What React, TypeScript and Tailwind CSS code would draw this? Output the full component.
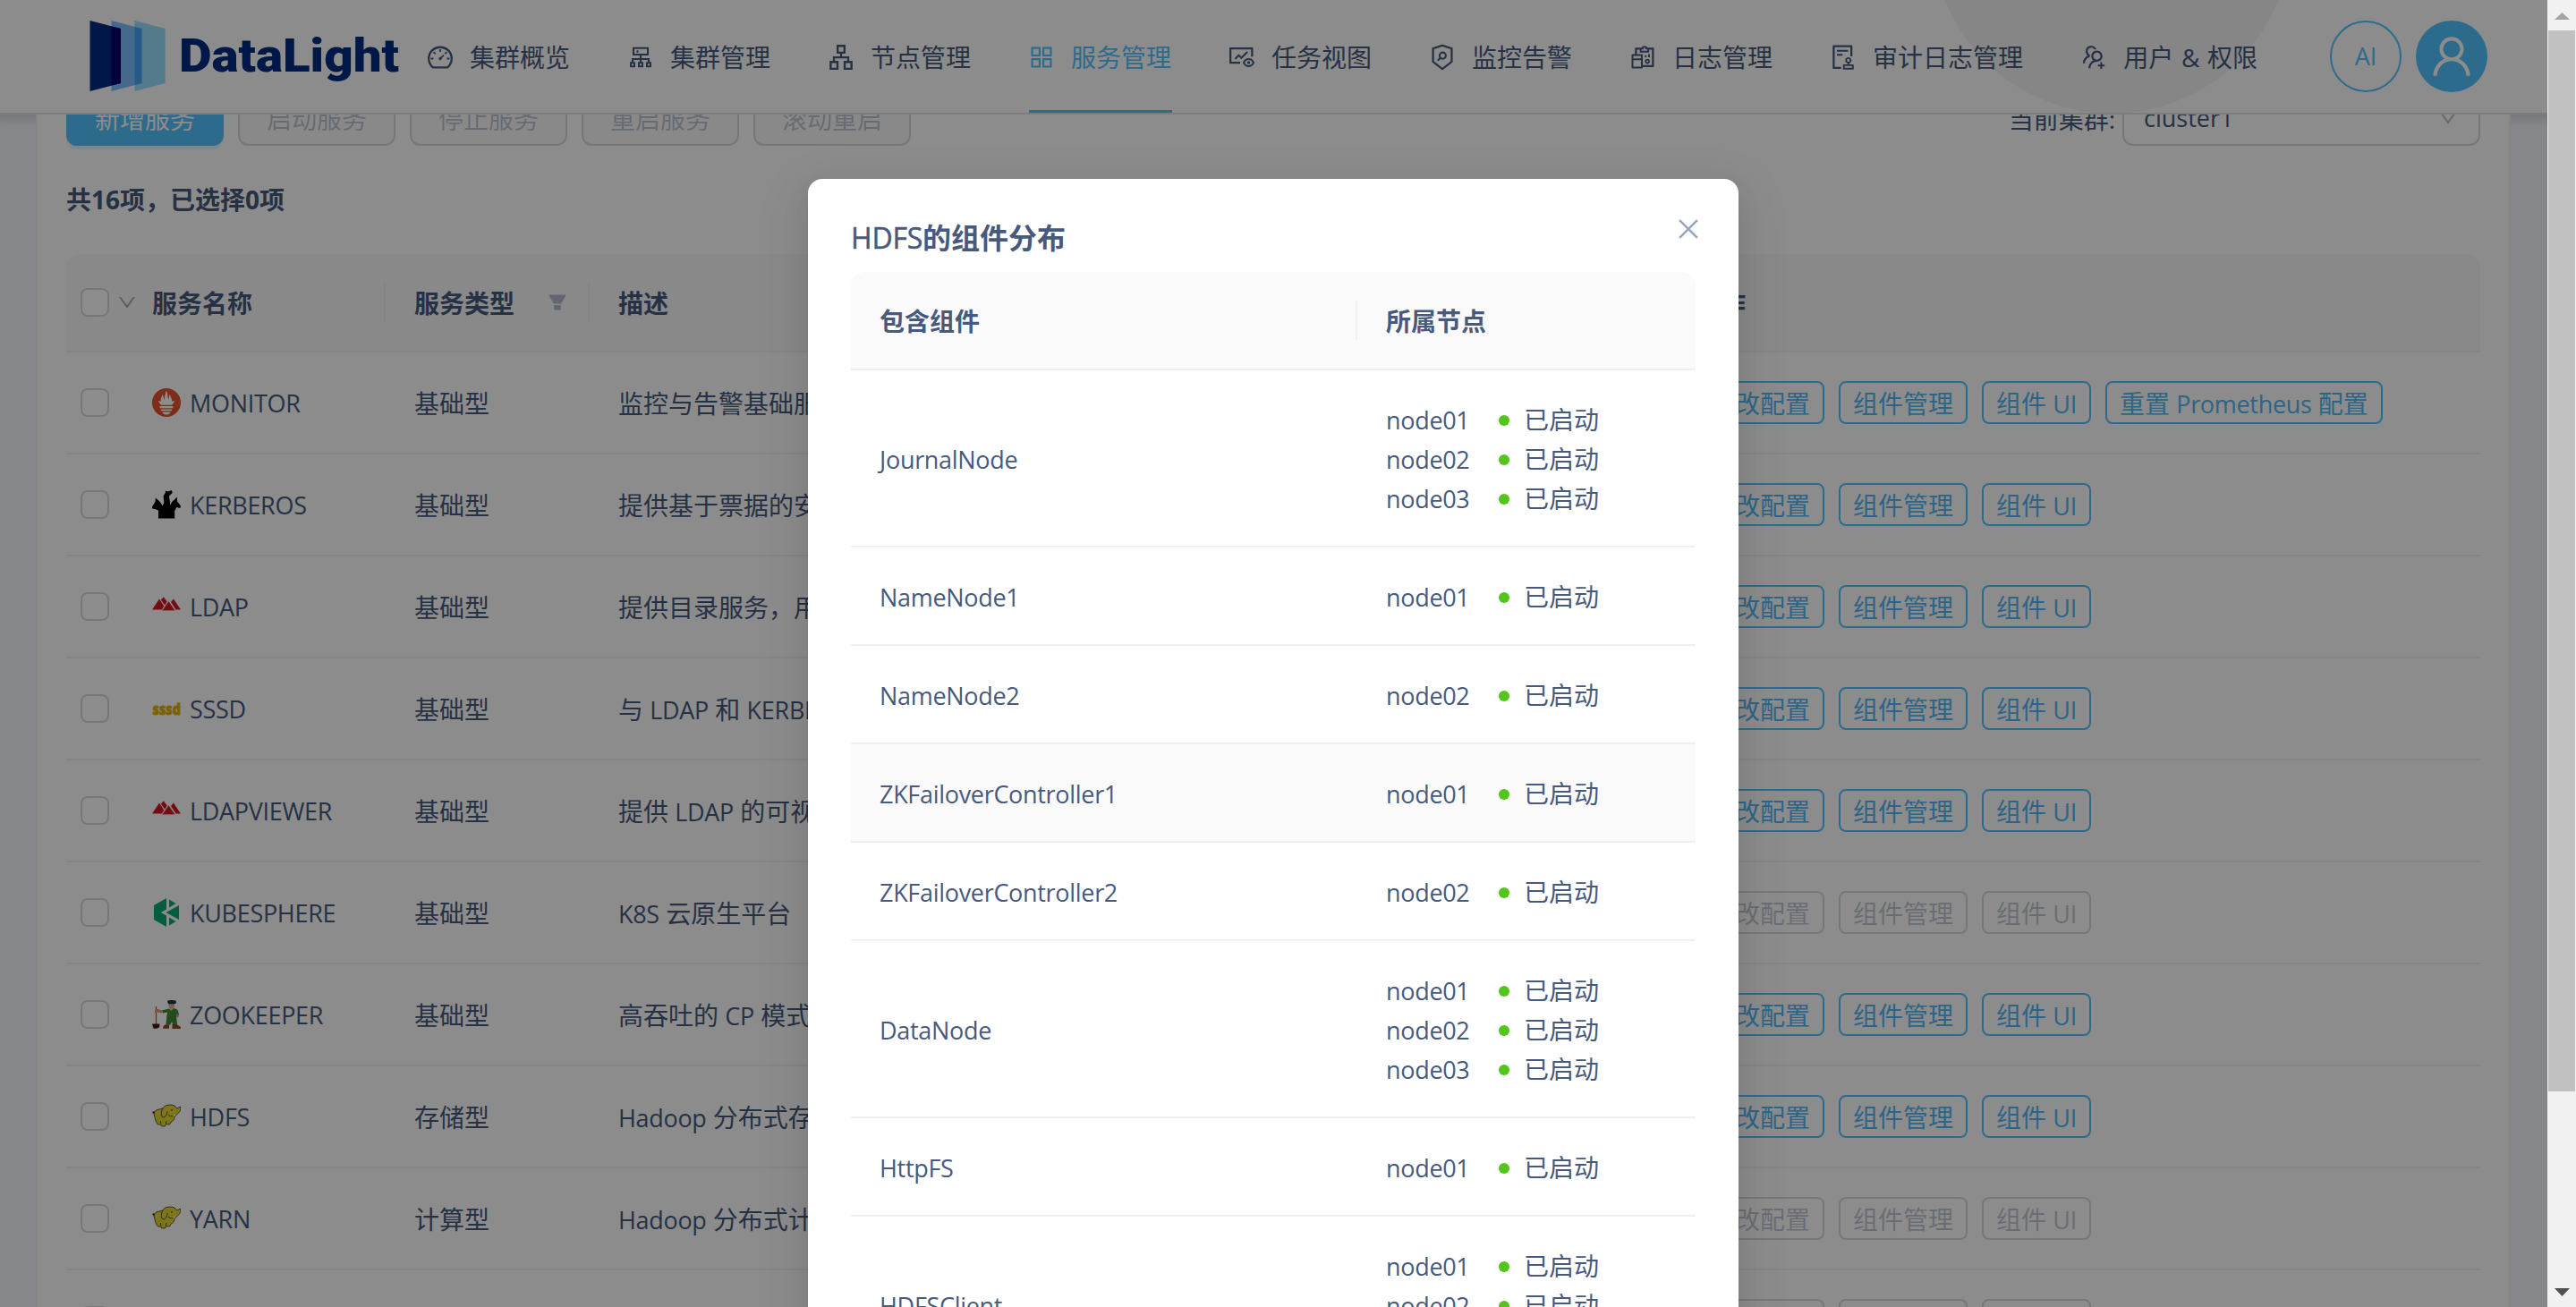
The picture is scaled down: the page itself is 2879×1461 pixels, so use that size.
import type { ReactNode } from "react";
import type { IconType } from "react-icons";
import {
  AiOutlineDashboard,
  AiOutlineCluster,
  AiOutlineApartment,
  AiOutlineAppstore,
  AiOutlineFundView,
  AiOutlineSecurityScan,
  AiOutlineReconciliation,
  AiOutlineAudit,
  AiOutlineUsergroupAdd,
  AiOutlineUser,
  AiOutlineClose,
  AiOutlineDown,
  AiFillFilter,
} from "react-icons/ai";

/* Latin runs are set slightly smaller and tighter than the Chinese text around them. */
function Mix({ children }: { children: string }) {
  const parts = children.split(/([\x21-\x7e]+(?: [\x21-\x7e]+)*)/);
  return (
    <>
      {parts.map((p, i) =>
        i % 2 ? (
          <span key={i} className="text-[0.964em] leading-none tracking-[-0.3px]">
            {p}
          </span>
        ) : (
          p
        ),
      )}
    </>
  );
}

const menu: { label: string; Icon: IconType; active?: boolean }[] = [
  { label: "集群概览", Icon: AiOutlineDashboard },
  { label: "集群管理", Icon: AiOutlineCluster },
  { label: "节点管理", Icon: AiOutlineApartment },
  { label: "服务管理", Icon: AiOutlineAppstore, active: true },
  { label: "任务视图", Icon: AiOutlineFundView },
  { label: "监控告警", Icon: AiOutlineSecurityScan },
  { label: "日志管理", Icon: AiOutlineReconciliation },
  { label: "审计日志管理", Icon: AiOutlineAudit },
  { label: "用户 & 权限", Icon: AiOutlineUsergroupAdd },
];

function Logo() {
  return (
    <svg className="ml-[100px] h-[126px] w-[346px] shrink-0" viewBox="100 0 346 126">
      <polygon points="150.5,23 184.6,32 184.6,93 150.5,102" fill="#99e0ff" />
      <polygon points="124.5,23 158.5,32 158.5,93 124.5,102" fill="#7cbfff" />
      <polygon points="150.5,30 158.5,32 158.5,93 150.5,95" fill="#49a4f5" />
      <polygon points="100.5,23 135,32 135,93 100.5,102" fill="#002c82" />
      <polygon points="124.5,29.5 135,32 135,93 124.5,95.5" fill="#000074" />
      <text
        x="200"
        y="80.3"
        fontFamily="Roboto, sans-serif"
        fontWeight="900"
        fontSize="52"
        textLength="246"
        lengthAdjust="spacingAndGlyphs"
        fill="#002c82"
      >
        DataLight
      </text>
    </svg>
  );
}

function Header() {
  return (
    <header className="relative flex h-32 shrink-0 overflow-hidden border-b-2 border-[#e4e4e4] bg-white">
      <div className="absolute top-[-273px] left-[2160px] size-[400px] rounded-full bg-black/[0.045]" />
      <Logo />
      <nav className="relative flex">
        {menu.map(({ label, Icon, active }) => (
          <div key={label} className="px-8">
            <div
              className={
                active
                  ? "flex h-[127px] items-center gap-[17px] border-b-4 border-[#52c4ff] pt-[5px] text-[#52c4ff]"
                  : "flex h-[127px] items-center gap-[17px] border-b-4 border-transparent pt-[5px]"
              }
            >
              <Icon className="-ml-0.5 size-8" />
              <span className="mr-px whitespace-nowrap [word-spacing:1.5px]">{label}</span>
            </div>
          </div>
        ))}
      </nav>
      <div className="relative mt-[23px] mr-[67px] ml-auto flex gap-4">
        <div className="flex size-20 items-center justify-center rounded-full border-2 border-[#52c4ff] text-[27px] text-[#52c4ff]">
          AI
        </div>
        <div className="flex size-20 items-center justify-center rounded-full bg-[#52c4ff] text-white">
          <AiOutlineUser className="size-14" />
        </div>
      </div>
    </header>
  );
}

function Prometheus() {
  return (
    <svg viewBox="0 0 32 32" className="size-8">
      <circle cx="16" cy="16" r="16" fill="#e6522c" />
      <path
        fill="#fff"
        d="M10.200 18.800C8.600 16.800 7.400 16.600 7 14c1.500.4 2 .6 3 .6C9 11 11 10.500 11.400 7c1.800 2 1.200 4.500 2.400 6C13.500 9 15.500 6 15.600 2.500c2.400 2.700 1.200 7.500 2.900 10C18.500 10 19 8 20.200 6.500c-.2 3.500 2.600 5 1.800 8.100 1 0 1.800-.2 3-.6-.2 2.500-1.700 3-3.200 4.800zM8.600 20h14.800v2.300H8.600zM10 23.600h12v1.600H10zM11.500 26.400h9c-.4 2.100-2.300 3-4.500 3s-4.100-.9-4.500-3z"
      />
    </svg>
  );
}

function Kerberos() {
  return (
    <svg viewBox="0 0 32 32" className="size-8">
      <path
        fill="#000"
        d="M7 31.500V22.500L3.200 21 .2 20.600 0 18.400 3.500 13 3.800 8.500l2.600 2.200C9 12.500 10.500 15 11.500 17.500L13.400 14 12.600 6.500 15 2.500 14.800.6l2.800 1L22 0l.6 3-3.600 3.400.6 4.600.9 6c.8-2.800 2-5 4.600-6.500L27.600 7.500l.5 5 3.900 5-.7 2.400L27.400 19l-2.200 4v8.500z"
      />
    </svg>
  );
}

function Ldap() {
  return (
    <svg viewBox="0 0 32 32" className="size-8">
      <path
        fill="#d41724"
        d="M0 19.500 8 7.500l5.300 8-2.500 4zM9.800 8.800l3-3.500 4 5.100-2.500 4.100zM21 11l3-3.500 8 12h-5.500z"
      />
      <path fill="#d41724" stroke="#fff" strokeWidth=".7" d="M10.800 20.800 18.500 9.800l7.500 11z" />
    </svg>
  );
}

function Sssd() {
  return (
    <svg viewBox="0 0 32 32" className="size-8">
      <text
        x="0.5"
        y="22.8"
        fontFamily="Open Sans, sans-serif"
        fontWeight="800"
        fontSize="17"
        textLength="31.5"
        lengthAdjust="spacingAndGlyphs"
        fill="#e0b000"
        stroke="#e0b000"
        strokeWidth=".8"
      >
        sssd
      </text>
    </svg>
  );
}

function Kubesphere() {
  return (
    <svg viewBox="0 0 32 32" className="size-8" fill="#00aa72">
      <path d="M16 0v12.600L9.800 16l6.200 3.400V32L2 24V8z" />
      <path d="M19 1.600 26.500 6 19 10.600zM30 8v16L15.500 16zM19 21.400l7.500 4.600-7.500 4.400z" />
    </svg>
  );
}

function Zookeeper() {
  return (
    <svg viewBox="0 0 32 32" className="size-8">
      <path d="M4.500 7v20" stroke="#a8623c" strokeWidth="1.200" />
      <path d="M0 26.500h8.500l-.5 4c-2.500 1.500-5 1.500-6.500 1z" fill="#3a2218" />
      <path d="M18.500 3h6.500v5.500l-2 1.500h-3l-1.500-2.500z" fill="#e0b08c" />
      <path d="M17 .8C19-.2 24-.2 26.800.8v2.800L25 4.200h-6.500l-1-1z" fill="#1e3048" />
      <path
        d="M11 11.500 18.500 9.500l3 2L24.500 9l4 1.800 1.800 5.700-3.300 1 1 9.500h-5l-1-3-1.500 3.500h-5l1-10.500.5-3.500-5 1z"
        fill="#3f8a35"
      />
      <path d="m3 10.500 3.500-.5 4.500 1.600v2.600L6 13.500l-3 .8zM27 15.500l3 1-.5 2.500-2 .5z" fill="#d99a70" />
      <path d="m20 9.200 1.500 3.300L23.500 9z" fill="#e0b08c" />
      <path d="M15 27.300h4v4.500h-7c0-2.200 1-3.500 3-4.500zM22.500 27h5l4.500 3v2h-9.500z" fill="#8a4a1c" />
    </svg>
  );
}

function Hadoop() {
  return (
    <svg viewBox="0 0 32 32" className="size-8">
      <path
        d="M2 13c.5-2.500 2-4 4-4.500L12 7c1-2.500 4-4 8-4s6.500 1.500 7.800 4.200L31.300 5C32.500 8 31 11.500 27.500 13.500L25 17c-.5 3-2 4.500-4 5l-1.500 3-4-.5-1 2.500-4-.2-1-2-3 .2L4 21z"
        fill="#e6d830"
        stroke="#33331a"
        strokeWidth=".8"
        strokeLinejoin="round"
      />
      <path
        d="M12 7c-2 3-2.500 8 0 10 2.500.5 5-3 5-7M24 15.500c-2.500.5-5 0-6-1.500M9.500 21l.5 3.500M16 21l-.5 3"
        fill="none"
        stroke="#33331a"
        strokeWidth=".8"
      />
      <path d="M22 8v1.600" stroke="#222" strokeWidth="1.200" />
      <path d="M25.500 12.500 23 16l3-.8z" fill="#fff" />
      <circle cx="1.600" cy="11.500" r="1.200" fill="#33331a" />
    </svg>
  );
}

type Service = { name: string; kind: string; desc: string; icon: ReactNode; disabled?: boolean; extra?: string };

const services: Service[] = [
  { name: "MONITOR", kind: "基础型", desc: "监控与告警基础服务", icon: <Prometheus />, extra: "重置 Prometheus 配置" },
  { name: "KERBEROS", kind: "基础型", desc: "提供基于票据的安全", icon: <Kerberos /> },
  { name: "LDAP", kind: "基础型", desc: "提供目录服务，用户", icon: <Ldap /> },
  { name: "SSSD", kind: "基础型", desc: "与 LDAP 和 KERBEROS", icon: <Sssd /> },
  { name: "LDAPVIEWER", kind: "基础型", desc: "提供 LDAP 的可视化", icon: <Ldap /> },
  { name: "KUBESPHERE", kind: "基础型", desc: "K8S 云原生平台", icon: <Kubesphere />, disabled: true },
  { name: "ZOOKEEPER", kind: "基础型", desc: "高吞吐的 CP 模式", icon: <Zookeeper /> },
  { name: "HDFS", kind: "存储型", desc: "Hadoop 分布式存储", icon: <Hadoop /> },
  { name: "YARN", kind: "计算型", desc: "Hadoop 分布式计算", icon: <Hadoop />, disabled: true },
  { name: "HIVE", kind: "计算型", desc: "数据仓库", icon: <Hadoop />, disabled: true },
];

const cols = "grid grid-cols-[64px_293px_228px_1204px_1fr] items-center";

function Checkbox() {
  return <div className="ml-4 size-8 rounded-lg border-2 border-[#d9d9d9] bg-white" />;
}

function SmallButton({ label, disabled }: { label: string; disabled?: boolean }) {
  return (
    <div
      className={
        disabled
          ? "flex h-12 items-center rounded-lg border-2 border-[#d9d9d9] px-[14px] pt-px leading-none whitespace-nowrap text-[#475a7d]/35"
          : "flex h-12 items-center rounded-lg border-2 border-[#52c4ff] px-[14px] pt-px leading-none whitespace-nowrap text-[#52b8f5]"
      }
    >
      <span>
        <Mix>{label}</Mix>
      </span>
    </div>
  );
}

function Toolbar() {
  return (
    <div className="flex h-16 items-center gap-4">
      <div className="flex h-16 w-44 items-center justify-center rounded-xl bg-[#52c4ff] pt-[3px] text-white shadow-[0_4px_0_rgba(5,175,255,0.1)]">
        新增服务
      </div>
      {["启动服务", "停止服务", "重启服务", "滚动重启"].map((t) => (
        <div
          key={t}
          className="flex h-16 w-44 items-center justify-center rounded-xl border-2 border-[#d9d9d9] bg-black/[0.02] pt-[3px] text-[#475a7d]/35"
        >
          {t}
        </div>
      ))}
      <span className="ml-auto pt-[3px]">当前集群:</span>
      <div className="-ml-2 flex h-16 w-[400px] items-center justify-between rounded-xl border-2 border-[#d9d9d9] px-[22px] pt-[2px]">
        <span className="text-[27px]">cluster1</span>
        <AiOutlineDown className="size-6 text-[#475a7d]/40" />
      </div>
    </div>
  );
}

function ServiceTable() {
  return (
    <div>
      <div className={`${cols} h-[110px] rounded-t-2xl border-b-2 border-[#f0f0f0] bg-[#fafafa] font-bold`}>
        <div className="flex w-[90px] items-center">
          <Checkbox />
          <AiOutlineDown className="ml-2 size-6 shrink-0 text-[#475a7d]/50" />
        </div>
        <div className="flex h-11 items-center border-r-2 border-[#f0f0f0] pt-[2px] pl-8">服务名称</div>
        <div className="flex h-11 items-center justify-between border-r-2 border-[#f0f0f0] pr-[22px] pl-8">
          <span className="pt-[2px]">服务类型</span>
          <AiFillFilter className="size-6 text-[#475a7d]/40" />
        </div>
        <div className="pt-[2px] pl-8">描述</div>
        <div className="pt-[2px] pl-8">操作</div>
      </div>
      {services.map((s) => (
        <div key={s.name} className={`${cols} h-[114px] border-b-2 border-[#f0f0f0]`}>
          <Checkbox />
          <div className="flex items-center gap-[10px] pl-8">
            {s.icon}
            <span>
              <Mix>{s.name}</Mix>
            </span>
          </div>
          <div className="pt-px pl-8">{s.kind}</div>
          <div className="w-[252px] overflow-hidden pt-px pl-8 whitespace-nowrap">
            <Mix>{s.desc}</Mix>
          </div>
          <div className="flex gap-4 pl-8">
            <SmallButton label="修改配置" disabled={s.disabled} />
            <SmallButton label="组件管理" disabled={s.disabled} />
            <SmallButton label="组件 UI" disabled={s.disabled} />
            {s.extra && <SmallButton label={s.extra} />}
          </div>
        </div>
      ))}
    </div>
  );
}

const components: { name: string; nodes: string[]; hover?: boolean }[] = [
  { name: "JournalNode", nodes: ["node01", "node02", "node03"] },
  { name: "NameNode1", nodes: ["node01"] },
  { name: "NameNode2", nodes: ["node02"] },
  { name: "ZKFailoverController1", nodes: ["node01"], hover: true },
  { name: "ZKFailoverController2", nodes: ["node02"] },
  { name: "DataNode", nodes: ["node01", "node02", "node03"] },
  { name: "HttpFS", nodes: ["node01"] },
  { name: "HDFSClient", nodes: ["node01", "node02", "node03"] },
];

function Modal() {
  return (
    <div className="relative mt-[200px] mr-px h-[1500px] w-[1040px] rounded-2xl bg-white px-12 pt-10 shadow-[0_12px_32px_0_rgba(0,0,0,0.08),0_6px_12px_-8px_rgba(0,0,0,0.12),0_18px_56px_16px_rgba(0,0,0,0.05)]">
      <AiOutlineClose className="absolute top-10 right-10 size-8 text-[#475a7d]/55" />
      <div className="h-16 text-[32px] leading-[51px] font-bold">
        <span className="text-[32px] font-medium tracking-[-0.2px] [-webkit-text-stroke:0.5px_currentColor]">HDFS</span>
        的组件分布
      </div>
      <div className="grid h-[110px] grid-cols-[566px_1fr] items-center rounded-t-2xl border-b-2 border-[#f0f0f0] bg-[#fafafa] font-bold">
        <div className="flex h-11 items-center border-r-2 border-[#f0f0f0] pt-[2px] pl-8">包含组件</div>
        <div className="pt-[2px] pl-8">所属节点</div>
      </div>
      {components.map((c) => (
        <div
          key={c.name}
          className={
            c.hover
              ? "grid grid-cols-[566px_1fr] items-center border-b-2 border-[#f0f0f0] bg-[#fafafa] pt-[33px] pb-[31px]"
              : "grid grid-cols-[566px_1fr] items-center border-b-2 border-[#f0f0f0] pt-[33px] pb-[31px]"
          }
        >
          <div className="h-11 pl-8">
            <Mix>{c.name}</Mix>
          </div>
          <div className="pl-8">
            {c.nodes.map((n) => (
              <div key={n} className="flex h-11 items-center">
                <span className="w-[126px]">
                  <Mix>{n}</Mix>
                </span>
                <span className="mt-px mr-4 size-3 rounded-full bg-[#52c41a]" />
                <span>已启动</span>
              </div>
            ))}
          </div>
        </div>
      ))}
    </div>
  );
}

function Scrollbar() {
  return (
    <div className="flex h-full w-8 shrink-0 flex-col items-center bg-[#f1f1f1]">
      <svg className="h-[34px] w-8" viewBox="0 0 32 34">
        <polygon points="8,22 16.5,14 25,22" fill="#a3a3a3" />
      </svg>
      <div className="h-[1186px] w-[30px] bg-[#c1c1c1]" />
      <svg className="mt-auto h-[34px] w-8" viewBox="0 0 32 34">
        <polygon points="8,13 25,13 16.5,22" fill="#505050" />
      </svg>
    </div>
  );
}

export default function App() {
  return (
    <div className="flex h-[1461px] w-[2879px] overflow-hidden font-['Open_Sans','Noto_Sans_CJK_SC',sans-serif] text-[28px] leading-[44px] text-[#475a7d]">
      <div className="relative flex h-full w-[2847px] flex-col overflow-hidden bg-[#f4f6fd]">
        <Header />
        <main className="flex-1 overflow-hidden pr-[41px] pl-10 shadow-[inset_0_16px_12px_-10px_rgba(0,0,0,0.12)]">
          <div className="-mt-[63px] h-[1500px] border-2 border-[#f0f0f0] bg-white px-8 pt-8">
            <Toolbar />
            <div className="mt-[38px] font-bold">共16项，已选择0项</div>
            <div className="mt-[39px]">
              <ServiceTable />
            </div>
          </div>
        </main>
        <div className="absolute inset-0 flex justify-center overflow-hidden bg-black/45">
          <Modal />
        </div>
      </div>
      <Scrollbar />
    </div>
  );
}
